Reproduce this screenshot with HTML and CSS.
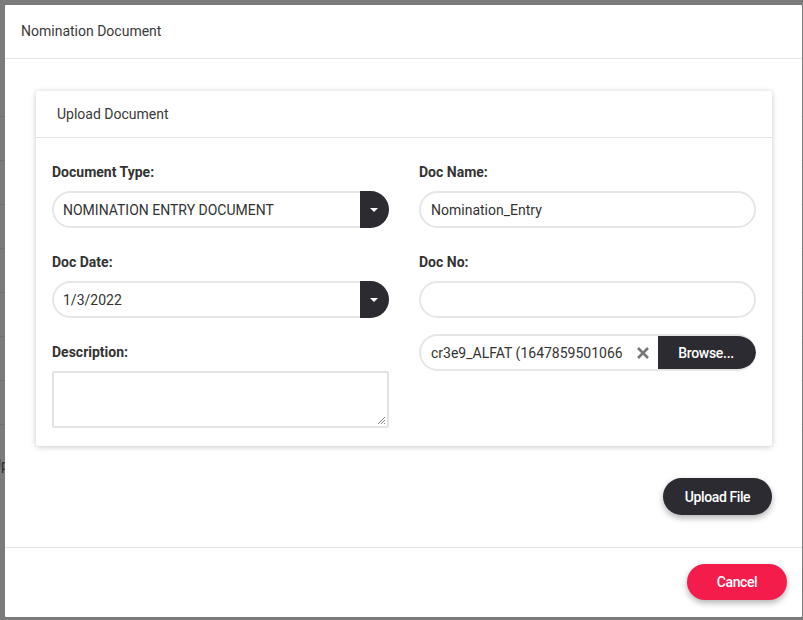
FILE: index.html
```html
<!DOCTYPE html>
<html>
<head>
<meta charset="utf-8">
<link rel="stylesheet" href="styles.css">
</head>
<body>
<div class="backdrop">
  <div class="bg-rows">
    <div class="bg-row"></div><div class="bg-row"></div><div class="bg-row"></div><div class="bg-row"></div>
    <div class="bg-row"></div><div class="bg-row"></div><div class="bg-row"></div><div class="bg-row"></div>
  </div>
  <span class="bg-text">Up</span>
</div>
<div class="modal">
  <div class="modal-header">Nomination Document</div>
  <div class="modal-body">
    <div class="card">
      <div class="card-header">Upload Document</div>
      <div class="card-body">
        <div class="col">
          <div class="group">
            <label class="label">Document Type:</label>
            <div class="select">
              <span class="select-text">NOMINATION ENTRY DOCUMENT</span>
              <span class="select-btn"><span class="caret"></span></span>
            </div>
          </div>
          <div class="group">
            <label class="label">Doc Date:</label>
            <div class="select">
              <span class="select-text">1/3/2022</span>
              <span class="select-btn"><span class="caret"></span></span>
            </div>
          </div>
          <div class="group last">
            <label class="label">Description:</label>
            <div class="textarea">
              <svg class="grip" width="9" height="9" viewBox="0 0 9 9"><path d="M8 1 L1 8 M8 4 L4 8 M8 7 L7 8" stroke="#888" stroke-width="1"/></svg>
            </div>
          </div>
        </div>
        <div class="col">
          <div class="group">
            <label class="label">Doc Name:</label>
            <div class="input">Nomination_Entry</div>
          </div>
          <div class="group">
            <label class="label">Doc No:</label>
            <div class="input"></div>
          </div>
          <div class="file">
            <span class="file-text">cr3e9_ALFAT (1647859501066).pdf</span>
            <span class="file-clear">
              <svg width="14" height="14" viewBox="0 0 14 14"><path d="M2 2 L12 12 M12 2 L2 12" stroke="#777" stroke-width="2.6" stroke-linecap="butt"/></svg>
            </span>
            <span class="browse">Browse...</span>
          </div>
        </div>
      </div>
    </div>
    <div class="actions">
      <button class="btn btn-dark">Upload File</button>
    </div>
  </div>
  <div class="modal-footer">
    <button class="btn btn-red">Cancel</button>
  </div>
</div>
</body>
</html>
```

FILE: styles.css
```css
* { box-sizing: border-box; }
html, body {
  margin: 0;
  padding: 0;
  width: 803px;
  height: 620px;
  overflow: hidden;
  font-family: Roboto, "Liberation Sans", Arial, sans-serif;
  background: #7a7a7a;
}
.backdrop {
  position: absolute;
  left: 0; top: 0; right: 0; bottom: 0;
  background: #7b7b7b;
}
.bg-rows {
  padding-top: 88px;
}
.bg-row {
  height: 29px;
  border-bottom: 1px solid #6f6f6f;
  margin-bottom: 15px;
}
.bg-text {
  position: absolute;
  left: -8px;
  top: 457px;
  font-size: 14px;
  color: #2b2a20;
}
.modal {
  position: absolute;
  left: 5px;
  top: 5px;
  width: 797px;
  height: 612px;
  background: #fff;
  display: flex;
  flex-direction: column;
  border-radius: 1px;
}
.modal-header {
  padding: 16px 16px 16px 16px;
  font-size: 14px;
  line-height: 20px;
  color: #3a3a3a;
  border-bottom: 1px solid #e4e4e4;
  height: 54px;
}
.modal-body {
  padding: 32px 30px 32px 31px;
  border-bottom: 1px solid #e4e4e4;
}
.card {
  background: #fff;
  border-radius: 3px;
  box-shadow: 0 1px 6px rgba(0,0,0,0.22);
}
.card-header {
  height: 47px;
  padding: 13px 21px;
  font-size: 14px;
  line-height: 20px;
  color: #3a3a3a;
  border-bottom: 1px solid #e4e4e4;
}
.card-body {
  display: grid;
  grid-template-columns: 337px 337px;
  column-gap: 30px;
  padding: 25px 16px 18px 16px;
}
.col {
  display: flex;
  flex-direction: column;
}
.group {
  display: flex;
  flex-direction: column;
  margin-bottom: 25px;
}
.group.last { margin-bottom: 0; }
.col:last-child .group:nth-child(2) { margin-bottom: 16px; }
.label {
  font-size: 14px;
  font-weight: 700;
  line-height: 18px;
  color: #333;
  margin-bottom: 10px;
}
.select, .input, .file {
  height: 37px;
  border: 2px solid #e6e6e6;
  border-radius: 19px;
  display: flex;
  align-items: center;
  font-size: 14px;
  color: #333;
  position: relative;
}
.input { padding-left: 10px; }
.select-text { padding-left: 9px; flex: 1; }
.select { border-right: none; }
.select-btn {
  width: 29px;
  height: 37px;
  margin-top: -2px;
  margin-bottom: -2px;
  background: #2c2b31;
  border-radius: 0 19px 19px 0;
  display: flex;
  align-items: center;
  justify-content: center;
  padding-right: 2px;
}
.caret {
  width: 0; height: 0;
  border-left: 4px solid transparent;
  border-right: 4px solid transparent;
  border-top: 4px solid #fff;
}
.textarea {
  height: 57px;
  border: 2px solid #e3e3e3;
  border-radius: 2px;
  position: relative;
}
.grip {
  position: absolute;
  right: 1px;
  bottom: 1px;
}
.file {
  border-right: none;
  overflow: hidden;
  padding-left: 10px;
}
.file-text {
  flex: 1;
  white-space: nowrap;
  overflow: hidden;
  min-width: 0;
  width: 0;
}
.file-clear {
  width: 36px;
  display: flex;
  justify-content: center;
  align-items: center;
  padding-left: 6px;
}
.browse {
  width: 98px;
  height: 37px;
  margin: -2px 0;
  background: #2c2b31;
  color: #fff;
  border-radius: 0 19px 19px 0;
  display: flex;
  align-items: center;
  justify-content: center;
  font-size: 14px;
  font-weight: 500;
  letter-spacing: -0.3px;
  padding-right: 2px;
}
.actions {
  display: flex;
  justify-content: flex-end;
  margin-top: 32px;
}
.btn {
  border: none;
  font-family: Roboto, "Liberation Sans", Arial, sans-serif;
  font-size: 14px;
  font-weight: 500;
  letter-spacing: -0.4px;
  color: #fff;
  height: 37px;
  border-radius: 19px;
  box-shadow: 0 3px 6px rgba(0,0,0,0.3);
}
.btn-dark {
  background: #2c2b31;
  width: 109px;
}
.modal-footer {
  display: flex;
  justify-content: flex-end;
  padding: 16px 15px 0 0;
}
.btn-red {
  background: #f41c4b;
  width: 100px;
  height: 36px;
}
```
